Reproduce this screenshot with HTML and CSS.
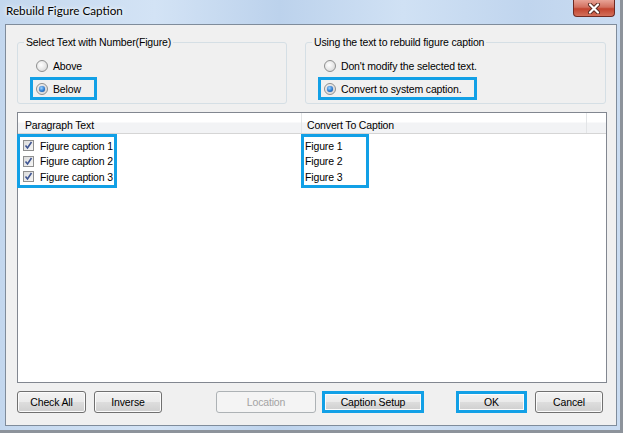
FILE: index.html
```html
<!DOCTYPE html>
<html lang="en">
<head>
    <meta charset="UTF-8">
    <title>Rebuild Figure Caption</title>
    <link rel="stylesheet" href="styles.css">
</head>
<body>
    <div class="window">
        <div class="titlebar">
            <span class="title">Rebuild Figure Caption</span>
            <span class="close-btn">
                <svg width="14" height="11" viewBox="0 0 14 11">
                    <path d="M3 1.5 L11 9.5 M11 1.5 L3 9.5" stroke="#5a2a22" stroke-width="4" stroke-linecap="round"/>
                    <path d="M3 1.5 L11 9.5 M11 1.5 L3 9.5" stroke="#ffffff" stroke-width="2.2" stroke-linecap="round"/>
                </svg>
            </span>
        </div>

        <div class="client">
            <div class="groups">
                <div class="group group-left">
                    <span class="legend">Select Text with Number(Figure)</span>
                    <div class="option"><span class="radio"></span>Above</div>
                    <div class="option hl"><span class="radio checked"></span>Below</div>
                </div>
                <div class="group group-right">
                    <span class="legend">Using the text to rebuild figure caption</span>
                    <div class="option"><span class="radio"></span>Don't modify the selected text.</div>
                    <div class="option hl"><span class="radio checked"></span>Convert to system caption.</div>
                </div>
            </div>

            <div class="list">
                <div class="list-header">
                    <div class="col col-1">Paragraph Text</div>
                    <div class="col col-2">Convert To Caption</div>
                    <div class="col col-3"></div>
                </div>
                <div class="list-body">
                    <div class="cell-box box-left">
                        <div class="row"><span class="check"><svg width="9" height="9" viewBox="0 0 9 9"><path d="M1.5 4.5 L3.5 7 L7.5 1" fill="none" stroke="#3f5592" stroke-width="1.6"/></svg></span>Figure caption 1</div>
                        <div class="row"><span class="check"><svg width="9" height="9" viewBox="0 0 9 9"><path d="M1.5 4.5 L3.5 7 L7.5 1" fill="none" stroke="#3f5592" stroke-width="1.6"/></svg></span>Figure caption 2</div>
                        <div class="row"><span class="check"><svg width="9" height="9" viewBox="0 0 9 9"><path d="M1.5 4.5 L3.5 7 L7.5 1" fill="none" stroke="#3f5592" stroke-width="1.6"/></svg></span>Figure caption 3</div>
                    </div>
                    <div class="cell-box box-right">
                        <div class="row">Figure 1</div>
                        <div class="row">Figure 2</div>
                        <div class="row">Figure 3</div>
                    </div>
                </div>
            </div>

            <div class="buttons">
                <span class="btn btn-check">Check All</span>
                <span class="btn btn-inverse">Inverse</span>
                <span class="btn btn-location disabled">Location</span>
                <span class="btn btn-setup hl">Caption Setup</span>
                <span class="btn btn-ok hl">OK</span>
                <span class="btn btn-cancel">Cancel</span>
            </div>
        </div>
    </div>
</body>
</html>
```

FILE: styles.css
```css
* {
    margin: 0;
    padding: 0;
    box-sizing: border-box;
}

body {
    width: 623px;
    height: 433px;
    overflow: hidden;
    background: #8d939b;
    font-family: 'Liberation Sans', Arial, sans-serif;
    font-size: 10.5px;
    letter-spacing: -0.15px;
    color: #000;
}

.window {
    width: 620px;
    height: 430px;
    padding: 0 3px 4px 5px;
    background: linear-gradient(90deg, #c3d7ee 0%, #d3e3f5 25%, #bcd2ec 45%, #d0e1f4 65%, #c0d5ee 85%, #cadcf1 100%);
    display: flex;
    flex-direction: column;
}

.titlebar {
    height: 24px;
    display: flex;
    align-items: flex-start;
}

.title {
    font-family: 'Lato', 'Liberation Sans', sans-serif;
    font-size: 11.7px;
    letter-spacing: 0;
    margin: 3px 0 0 1px;
    text-shadow: 0 0 6px #fff, 0 0 3px #fff;
}

.close-btn {
    margin-left: auto;
    margin-right: 2px;
    width: 42px;
    height: 17px;
    border: 1px solid #6f2a22;
    border-top: none;
    border-radius: 0 0 4px 4px;
    background: linear-gradient(#e8a396 0%, #d2705f 45%, #c2442f 55%, #d3705a 100%);
    display: flex;
    align-items: center;
    justify-content: center;
}

.client {
    flex: 1;
    background: #f0f0f0;
    border: 1px solid #7f8c9b;
    display: flex;
    flex-direction: column;
}

.groups {
    display: flex;
    padding: 17px 0 0 11px;
    gap: 18px;
}

.group {
    position: relative;
    height: 62px;
    border: 1px solid #d5dfe5;
    border-radius: 3px;
    padding: 11px 0 0 12px;
}

.group-left {
    width: 270px;
}

.group-right {
    width: 301px;
}

.legend {
    position: absolute;
    top: -7px;
    left: 6px;
    padding: 0 2px;
    background: #f0f0f0;
    line-height: 13px;
}

.option {
    display: flex;
    align-items: center;
    width: max-content;
    height: 23px;
    border: 3px solid transparent;
    padding: 0 13px 0 3px;
    gap: 5px;
}

.option.hl {
    border-color: #12a0e6;
}

.radio {
    width: 12px;
    height: 12px;
    border-radius: 50%;
    border: 1px solid #8e8f8f;
    background: radial-gradient(circle at 40% 40%, #ffffff 0%, #e9e9e9 50%, #cfcfcf 100%);
    display: flex;
    align-items: center;
    justify-content: center;
}

.radio.checked::after {
    content: "";
    width: 6px;
    height: 6px;
    border-radius: 50%;
    background: radial-gradient(circle at 40% 35%, #9fd4ff 0%, #2b7cd3 55%, #0d3e87 100%);
    box-shadow: 0 0 1px #0c3370;
}

.list {
    margin: 8px 0 0 11px;
    width: 590px;
    height: 271px;
    border: 1px solid #828790;
    background: #fff;
}

.list-header {
    display: flex;
    height: 21px;
    border-bottom: 1px solid #d5d5d5;
    background: linear-gradient(#ffffff 0%, #ffffff 45%, #f2f3f5 50%, #f2f3f5 100%);
}

.col {
    padding: 6px 0 0 7px;
    border-right: 1px solid #e3e5e7;
}

.col-1 {
    width: 284px;
}

.col-2 {
    width: 285px;
    padding-left: 5px;
}

.col-3 {
    flex: 1;
    border-right: none;
}

.list-body {
    display: flex;
}

.cell-box {
    border: 3px solid #12a0e6;
    padding: 1px 0 0;
}

.box-left {
    margin-left: -1px;
    width: 100px;
}

.box-right {
    margin-left: 184px;
    width: 68px;
}

.row {
    height: 15.5px;
    display: flex;
    align-items: center;
    white-space: nowrap;
}

.box-left .row {
    padding-left: 3px;
    gap: 6px;
}

.box-right .row {
    padding-left: 1px;
}

.check {
    width: 11px;
    height: 11px;
    border: 1px solid #8f8f8f;
    background: linear-gradient(135deg, #dcdcdc, #f6f6f6);
    display: flex;
    align-items: center;
    justify-content: center;
}

.buttons {
    display: flex;
    margin: 8px 0 0 11px;
}

.btn {
    height: 22px;
    border: 1px solid #707070;
    border-radius: 3px;
    background: linear-gradient(#f2f2f2 0%, #ebebeb 48%, #dddddd 52%, #cfcfcf 100%);
    box-shadow: inset 0 0 0 1px #fbfbfb;
    display: flex;
    align-items: center;
    justify-content: center;
}

.btn.hl {
    border: 3px solid #12a0e6;
    border-radius: 0;
}

.btn.disabled {
    color: #a3a3a3;
    border-color: #adb2b5;
    background: #f4f4f4;
    box-shadow: none;
}

.btn-check {
    width: 69px;
}

.btn-inverse {
    width: 68px;
    margin-left: 8px;
}

.btn-location {
    width: 100px;
    margin-left: 54px;
}

.btn-setup {
    width: 102px;
    margin-left: 6px;
}

.btn-ok {
    width: 71px;
    margin-left: 32px;
}

.btn-cancel {
    width: 68px;
    margin-left: 8px;
}
```
